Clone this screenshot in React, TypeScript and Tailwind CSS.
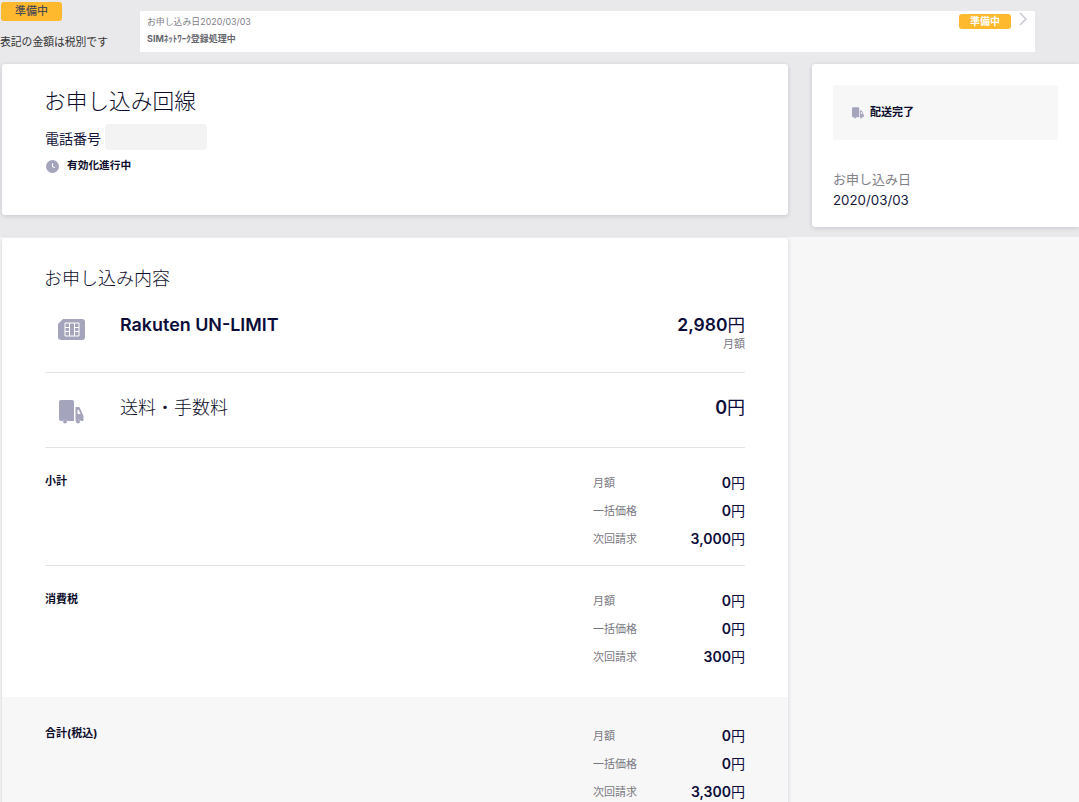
const Truck = ({ className }: { className: string }) => (
  <svg viewBox="0 0 25 24" className={className} fill="#a5a4bd">
    <path d="M2 0h11a2 2 0 0 1 2 2v19H8.500a3 3 0 0 0-5 0H2a2 2 0 0 1-2-2V2a2 2 0 0 1 2-2z" />
    <path d="M16.500 7h3a1.500 1.500 0 0 1 1.400 1l3.600 8v4a1 1 0 0 1-1 1h-1.500a3 3 0 0 0-5 0h-.5z" />
    <circle cx="6" cy="21.500" r="2" />
    <circle cx="19" cy="21.500" r="2" />
    <path d="M18.500 10h1.300l1.700 4h-3z" fill="#fff" />
  </svg>
);

const rows = (a: string, b: string, c: string) => [
  { label: "月額", value: a },
  { label: "一括価格", value: b },
  { label: "次回請求", value: c },
];

function Yen({ value, size }: { value: string; size: string }) {
  return (
    <span className={`font-semibold text-[#0c0c3a] ${size}`}>
      {value}
      <span className="font-normal">円</span>
    </span>
  );
}

function Summary({ title, values, className, titleClass }: { title: string; values: string[]; className: string; titleClass: string }) {
  return (
    <div className={`flex justify-between ${className}`}>
      <div className={`text-[11px] font-bold leading-4 text-[#0c0c2a] ${titleClass}`}>{title}</div>
      <div className="w-[152px]">
        {rows(values[0], values[1], values[2]).map((r) => (
          <div key={r.label} className="flex h-7 items-center justify-between">
            <span className="text-[11px] text-[#77777f]">{r.label}</span>
            <Yen value={r.value} size="text-sm" />
          </div>
        ))}
      </div>
    </div>
  );
}

export default function App() {
  return (
    <div
      className="h-[802px] overflow-hidden bg-[#e9e9eb] text-[#111]"
      style={{ fontFamily: 'Inter, "Noto Sans CJK JP", sans-serif' }}
    >
      <div className="flex h-16">
        <div className="w-[140px] pt-[2px]">
          <div className="ml-px flex h-[19px] w-[61px] items-center justify-center rounded-[3px] bg-[#ffb92e] text-[11px] font-medium text-[#4a4a55]">
            準備中
          </div>
          <div className="mt-[12px] text-[10.8px] leading-5 text-[#333]">表記の金額は税別です</div>
        </div>
        <div className="mt-[11px] flex h-[41px] w-[895px] justify-between bg-white pl-[7px] pr-2">
          <div>
            <div className="pt-[3px] text-[8.9px] leading-4 text-[#808088]">お申し込み日2020/03/03</div>
            <div className="mt-px text-[9px] font-bold leading-4 text-[#66666e]">SIMﾈｯﾄﾜｰｸ登録処理中</div>
          </div>
          <div className="flex items-start gap-2 pt-px">
            <div className="mt-[2px] flex h-[15px] w-[52px] items-center justify-center rounded-[3px] bg-[#ffb92e] text-[10px] font-bold text-white">
              準備中
            </div>
            <svg viewBox="0 0 8 14" className="h-[14px] w-2" fill="none" stroke="#c9c9d6" strokeWidth="1.500">
              <path d="M1 1l6 6-6 6" />
            </svg>
          </div>
        </div>
      </div>

      <div className="flex h-[173px] items-start pl-[2px]">
        <section className="h-[151px] w-[786px] rounded-[3px] bg-white pl-[43px] pt-[21px] shadow-[0_1px_4px_rgba(40,40,80,0.18)]">
          <h1 className="-ml-px text-[21.700px] font-light leading-8 text-[#0c0c2a]">お申し込み回線</h1>
          <div className="mt-[7px] flex items-start">
            <span className="mt-[2px] text-sm leading-[26px] text-[#15153a]">電話番号</span>
            <div className="ml-1 h-[26px] w-[102px] rounded-sm bg-[#f3f3f4]" />
          </div>
          <div className="mt-[6px] flex items-center gap-2">
            <svg viewBox="0 0 14 14" className="ml-px h-[13px] w-[13px]">
              <circle cx="7" cy="7" r="7" fill="#a5a4bd" />
              <path d="M7 3.500V7l2.500 1.500" fill="none" stroke="#fff" strokeWidth="1.200" />
            </svg>
            <span className="text-[10.7px] font-bold text-[#0c0c2a]">有効化進行中</span>
          </div>
        </section>

        <aside className="ml-[24px] h-[163px] flex-1 rounded-l-[3px] bg-white px-[21px] pt-[21px] shadow-[0_1px_4px_rgba(40,40,80,0.18)]">
          <div className="flex h-[55px] items-center gap-[6px] rounded-[3px] bg-[#f7f7f8] pl-[19px]">
            <Truck className="h-[12px] w-[12px]" />
            <span className="text-[11px] font-bold text-[#0c0c2a]">配送完了</span>
          </div>
          <div className="mt-[29px] text-[13px] leading-5 text-[#808088]">お申し込み日</div>
          <div className="mt-px text-[13.300px] leading-5 text-[#15153a]">2020/03/03</div>
        </aside>
      </div>

      <div className="h-[565px] bg-[#f7f7f8] pl-[2px] pt-px">
        <section className="h-[600px] w-[786px] rounded-[3px] bg-white pt-[29px] shadow-[0_1px_4px_rgba(40,40,80,0.18)]">
          <div className="px-[43px]">
            <h2 className="-ml-px text-[18px] font-light leading-6 text-[#0c0c2a]">お申し込み内容</h2>
            <div className="flex h-[82px] justify-between border-b border-[#e3e3e5] pt-[22px]">
              <div className="flex items-start">
                <svg viewBox="0 0 27 21" className="ml-[13px] mt-[6px] h-[21px] w-[27px]">
                  <path d="M5 0h19a3 3 0 0 1 3 3v15a3 3 0 0 1-3 3H3a3 3 0 0 1-3-3V5z" fill="#a5a4bd" />
                  <path d="M7 4h14v13H7zM11.500 4v13M16.500 4v13M7 8.500h4.500M7 12.500h4.500M16.500 8.500H21M16.500 12.500H21" fill="none" stroke="#fff" strokeWidth="1" />
                </svg>
                <span className="ml-[35px] text-[17.900px] font-semibold leading-6 text-[#0c0c3a]">Rakuten UN-LIMIT</span>
              </div>
              <div className="text-right">
                <Yen value="2,980" size="text-[17.500px] leading-6" />
                <div className="mt-px text-[11px] leading-3 text-[#77777f]">月額</div>
              </div>
            </div>
            <div className="flex h-[75px] items-center justify-between border-b border-[#e3e3e5]">
              <div className="flex items-center">
                <Truck className="ml-[14px] mt-[4px] h-[24px] w-[25px]" />
                <span className="mb-[6px] ml-[36px] text-[18px] font-light text-[#0c0c2a]">送料・手数料</span>
              </div>
              <div className="mb-[6px]">
                <Yen value="0" size="text-[18px]" />
              </div>
            </div>
            <Summary title="小計" titleClass="mt-[4px]" values={["0", "0", "3,000"]} className="h-[118px] border-b border-[#e3e3e5] pt-[21px]" />
            <Summary title="消費税" titleClass="mt-[4px]" values={["0", "0", "300"]} className="h-[131px] pt-[21px]" />
          </div>
          <Summary title="合計(税込)" titleClass="mt-[3px]" values={["0", "0", "3,300"]} className="h-[200px] rounded-b-[3px] bg-[#f7f7f8] px-[43px] pt-[25px]" />
        </section>
      </div>
    </div>
  );
}
